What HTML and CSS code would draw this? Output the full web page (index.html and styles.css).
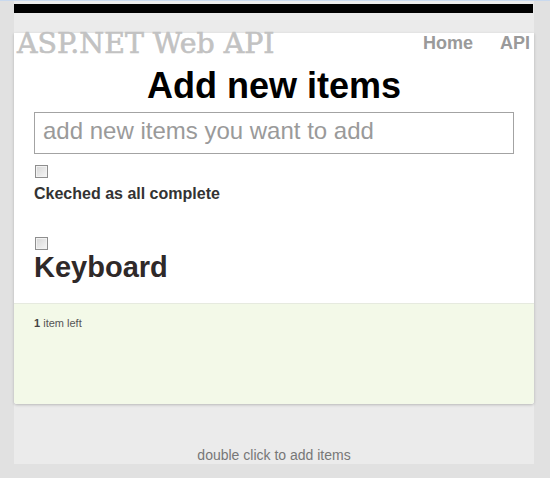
FILE: index.html
```html
<!DOCTYPE html>
<html>
<head>
<meta charset="utf-8">
<title>ASP.NET Web API</title>
<link rel="stylesheet" href="styles.css">
</head>
<body>
<div class="page">
  <div class="topbar"></div>
  <div class="band"></div>
  <section class="card">
    <header class="header">
      <div class="brand">ASP.NET Web API</div>
      <nav class="nav">
        <a class="nav-link" href="#">Home</a>
        <a class="nav-link" href="#">API</a>
      </nav>
    </header>
    <div class="main">
      <h1 class="title">Add new items</h1>
      <input class="new-item" type="text" placeholder="add new items you want to add">
      <input class="check" type="checkbox">
      <div class="toggle-label">Ckeched as all complete</div>
      <ul class="list">
        <li class="item">
          <input class="check" type="checkbox">
          <div class="item-text">Keyboard</div>
        </li>
      </ul>
    </div>
    <footer class="card-footer">
      <span class="count"><strong>1</strong> item left</span>
    </footer>
  </section>
  <p class="hint">double click to add items</p>
</div>
</body>
</html>
```

FILE: styles.css
```css
html, body {
  margin: 0;
  padding: 0;
}

body {
  background: #e1e1e1;
  border-top: 1px solid #c9d9ee;
  font-family: "Liberation Sans", Arial, sans-serif;
  min-height: 477px;
}

.page {
  width: 520px;
  margin-left: 14px;
  background: #ebebeb;
  padding-top: 3px;
  padding-bottom: 1px;
}

.topbar {
  height: 9px;
  background: #000;
  margin-right: 1px;
}

.band {
  height: 20px;
}

.card {
  background: #fff;
  border-radius: 0 0 3px 3px;
  box-shadow: 0 1px 3px rgba(0, 0, 0, 0.22);
}

.header {
  display: flex;
  justify-content: space-between;
  align-items: flex-start;
  height: 22px;
}

.brand {
  font-family: "DejaVu Serif", "Liberation Serif", serif;
  font-size: 28.4px;
  line-height: 22px;
  color: #c2c2c2;
  padding-left: 3px;
  -webkit-text-stroke: 0.6px #c2c2c2;
}

.nav {
  display: flex;
  gap: 27px;
  padding-right: 4px;
}

.nav-link {
  font-size: 18px;
  line-height: 20px;
  font-weight: bold;
  color: #9a9a9a;
  text-decoration: none;
}

.main {
  padding: 0 20px;
}

.title {
  margin: 11px 0 0;
  font-size: 36px;
  line-height: 40px;
  font-weight: bold;
  color: #000;
  text-align: center;
}

.new-item {
  display: block;
  box-sizing: border-box;
  width: 480px;
  height: 42px;
  margin: 6px 0 0;
  padding: 0 8px 4px;
  border: 1px solid #a3a3a3;
  font-family: "Liberation Sans", Arial, sans-serif;
  font-size: 24px;
  color: #333;
  background: #fff;
  outline: none;
}

.new-item::placeholder {
  color: #9a9a9a;
}

.check {
  appearance: none;
  -webkit-appearance: none;
  display: block;
  box-sizing: border-box;
  width: 13px;
  height: 13px;
  margin: 11px 0 0 1px;
  border: 1px solid #8e8e8e;
  background: linear-gradient(135deg, #d6d6d6, #f7f7f7);
  box-shadow: inset 0 0 0 1px #f2f2f2;
}

.toggle-label {
  margin-top: 7px;
  font-size: 16px;
  line-height: 18px;
  font-weight: bold;
  color: #333;
}

.list {
  list-style: none;
  margin: 0;
  padding: 0;
}

.item .check {
  margin-top: 34px;
}

.item-text {
  font-size: 29px;
  line-height: 34px;
  font-weight: bold;
  color: #2f2929;
}

.card-footer {
  margin-top: 19px;
  border-top: 1px solid #e6eadf;
  background: #f3f9e8;
  height: 101px;
  box-sizing: border-box;
  padding: 9px 20px 0;
  border-radius: 0 0 3px 3px;
}

.count {
  font-size: 11px;
  line-height: 13px;
  color: #555;
}

.count strong {
  color: #444;
}

.hint {
  margin: 43px 0 0;
  font-size: 14px;
  line-height: 16px;
  color: #777;
  text-align: center;
}
```
